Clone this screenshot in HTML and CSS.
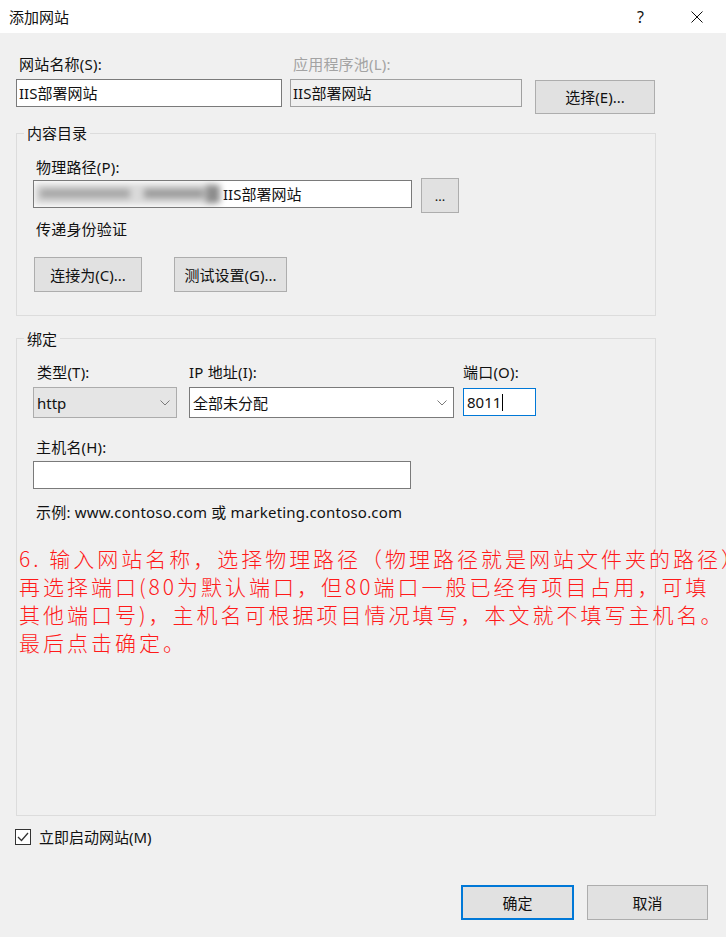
FILE: index.html
```html
<!DOCTYPE html>
<html lang="zh-CN">
<head>
<meta charset="utf-8">
<title>添加网站</title>
<link rel="stylesheet" href="styles.css">
</head>
<body>
<div class="dialog">
  <div class="titlebar">
    <span class="title">添加网站</span>
    <span class="help">?</span>
    <span class="close"><svg width="12" height="12" viewBox="0 0 12 12"><path d="M0.5 0.5 L11.5 11.5 M11.5 0.5 L0.5 11.5" stroke="#111" stroke-width="1" fill="none"/></svg></span>
  </div>

  <div class="site-grid">
    <span class="lbl">网站名称(S):</span>
    <span class="lbl disabled">应用程序池(L):</span>
    <span></span>
    <div class="input w-name">IIS部署网站</div>
    <div class="input readonly">IIS部署网站</div>
    <button class="btn btn-select">选择(E)...</button>
  </div>

  <div class="group group-content">
    <div class="legend">内容目录</div>
    <span class="lbl lbl-path">物理路径(P):</span>
    <div class="path-row">
      <div class="input w-path">
        <span class="redacted"><i class="smudge s1"></i><i class="smudge s2"></i><i class="smudge s3"></i><i class="smudge s4"></i></span>
        <span>IIS部署网站</span>
      </div>
      <button class="btn btn-browse">...</button>
    </div>
    <span class="lbl lbl-auth">传递身份验证</span>
    <div class="btn-row">
      <button class="btn btn-connect">连接为(C)...</button>
      <button class="btn btn-test">测试设置(G)...</button>
    </div>
  </div>

  <div class="group group-bind">
    <div class="legend legend-bind">绑定</div>
    <div class="bind-row">
      <div class="field f-type">
        <span class="lbl">类型(T):</span>
        <div class="select select-gray"><span>http</span><svg width="10" height="6" viewBox="0 0 10 6"><polyline points="0.5,0.5 5,5 9.5,0.5" fill="none" stroke="#7a7a7a" stroke-width="1"/></svg></div>
      </div>
      <div class="field f-ip">
        <span class="lbl lbl-flush">IP 地址(I):</span>
        <div class="select"><span>全部未分配</span><svg width="10" height="6" viewBox="0 0 10 6"><polyline points="0.5,0.5 5,5 9.5,0.5" fill="none" stroke="#7a7a7a" stroke-width="1"/></svg></div>
      </div>
      <div class="field f-port">
        <span class="lbl lbl-flush">端口(O):</span>
        <div class="input port">8011<span class="caret"></span></div>
      </div>
    </div>
    <span class="lbl lbl-host">主机名(H):</span>
    <div class="input w-host"></div>
    <span class="lbl lbl-example">示例: www.contoso.com 或 marketing.contoso.com</span>
  </div>

  <div class="check-row">
    <span class="checkbox"><svg width="14" height="14" viewBox="0 0 14 14"><polyline points="2,7 5.5,10.5 12,3" fill="none" stroke="#333" stroke-width="1.3"/></svg></span>
    <span class="check-label">立即启动网站(M)</span>
  </div>

  <div class="footer">
    <button class="btn btn-ok">确定</button>
    <button class="btn btn-cancel">取消</button>
  </div>

  <div class="note">6. 输入网站名称，选择物理路径（物理路径就是网站文件夹的路径）<br>再选择端口(80为默认端口，但80端口一般已经有项目占用，可填<br>其他端口号)，主机名可根据项目情况填写，本文就不填写主机名。<br>最后点击确定。</div>
</div>
</body>
</html>
```

FILE: styles.css
```css
* { box-sizing: border-box; }
html, body { margin: 0; padding: 0; }
body {
  width: 726px;
  height: 937px;
  overflow: hidden;
  background: #f0f0f0;
  font-family: "Noto Sans", "Noto Sans CJK SC", sans-serif;
  font-size: 15px;
  color: #111;
}
.dialog {
  position: relative;
  width: 726px;
  height: 937px;
  overflow: hidden;
  background: #f0f0f0;
}
.titlebar {
  height: 33px;
  background: #fff;
  display: flex;
  align-items: center;
  padding-left: 9px;
}
.title { line-height: 18px; }
.help { margin-left: auto; font-size: 16px; line-height: 18px; color: #111; }
.close { margin-left: 47px; margin-right: 23px; display: flex; }

.lbl {
  display: block;
  line-height: 18px;
  padding-left: 3px;
  white-space: nowrap;
  letter-spacing: 0.2px;
}
.lbl.disabled { color: #a3a3a3; }
.lbl-flush { padding-left: 0; }

.site-grid {
  display: grid;
  grid-template-columns: 266px 232px 125px;
  column-gap: 8px;
  row-gap: 6px;
  margin: 22px 0 0 16px;
  align-items: start;
}
.input {
  height: 28px;
  border: 1px solid #7a7a7a;
  background: #fff;
  padding: 0 2px;
  display: flex;
  align-items: center;
  line-height: 18px;
  white-space: nowrap;
  overflow: hidden;
}
.input.readonly { background: #f0f0f0; border-color: #a0a0a0; }

.btn {
  font: inherit;
  color: #111;
  background: #e1e1e1;
  border: 1px solid #adadad;
  height: 35px;
  padding: 0;
  margin: 0;
  display: flex;
  align-items: center;
  justify-content: center;
  line-height: 18px;
}
.btn-select { width: 120px; height: 34px; justify-self: end; margin-top: 1px; }

.group {
  border: 1px solid #dcdcdc;
  margin-left: 16px;
  width: 640px;
  padding: 0 0 0 16px;
}
.legend {
  line-height: 18px;
  margin: -10px 0 0 -9px;
  padding: 0 3px;
  background: #f0f0f0;
  width: max-content;
}
.group-content { margin-top: 19px; padding-bottom: 23px; }
.lbl-path { margin-top: 16px; }
.path-row { display: flex; align-items: flex-start; margin-top: 2px; }
.w-path { width: 379px; margin-top: 2px; padding-left: 0; }
.redacted {
  position: relative;
  display: block;
  width: 189px;
  height: 26px;
  flex: none;
  filter: blur(3px);
}
.smudge {
  position: absolute;
  display: block;
  background: #b4b4b4;
}
.s1 { left: 0; top: 2px; width: 180px; height: 22px; background: #dadada; }
.s2 { left: 6px; top: 8px; width: 90px; height: 9px; background: #a6a6a6; }
.s3 { left: 110px; top: 8px; width: 60px; height: 9px; background: #9a9a9a; }
.s4 { left: 172px; top: 4px; width: 14px; height: 18px; background: #8c8c8c; }
.btn-browse { width: 38px; margin-left: 9px; font-size: 13px; }
.lbl-auth { margin-top: 7px; }
.btn-row { display: flex; margin-top: 19px; }
.btn-connect { width: 108px; margin-left: 1px; }
.btn-test { width: 113px; margin-left: 32px; }

.group-bind { margin-top: 22px; height: 478px; }
.legend-bind { margin-top: -9px; }
.bind-row { display: flex; margin-top: 15px; }
.field { display: flex; flex-direction: column; }
.f-type { width: 144px; }
.f-ip { width: 265px; margin-left: 12px; }
.f-port { width: 73px; margin-left: 9px; }
.f-type .lbl { padding-left: 4px; }
.select {
  margin-top: 6px;
  height: 31px;
  border: 1px solid #7a7a7a;
  background: #fff;
  display: flex;
  align-items: center;
  justify-content: space-between;
  padding: 0 6px 0 3px;
  white-space: nowrap;
}
.select-gray { background: #e5e5e5; border-color: #acacac; }
.port {
  margin-top: 7px;
  border-color: #0078d7;
  padding-left: 3px;
}
.caret {
  display: inline-block;
  width: 1px;
  height: 17px;
  background: #000;
  margin-left: 1px;
}
.lbl-host { margin-top: 20px; }
.w-host { width: 378px; margin-top: 5px; }
.lbl-example { margin-top: 14px; }

.check-row {
  display: flex;
  align-items: center;
  margin: 12px 0 0 15px;
  height: 18px;
}
.checkbox {
  width: 16px;
  height: 16px;
  border: 1px solid #333;
  background: #fff;
  display: flex;
  align-items: center;
  justify-content: center;
}
.check-label { margin-left: 8px; line-height: 18px; }

.footer {
  display: flex;
  justify-content: flex-end;
  margin: 39px 18px 0 0;
}
.btn-ok { width: 113px; border: 2px solid #0078d7; }
.btn-cancel { width: 121px; margin-left: 13px; }

.note {
  position: absolute;
  left: 19px;
  top: 544px;
  font-family: "Noto Sans CJK SC", sans-serif;
  font-weight: 300;
  font-size: 21px;
  line-height: 28px;
  letter-spacing: 3px;
  color: #ff1a1a;
  white-space: nowrap;
}
```
